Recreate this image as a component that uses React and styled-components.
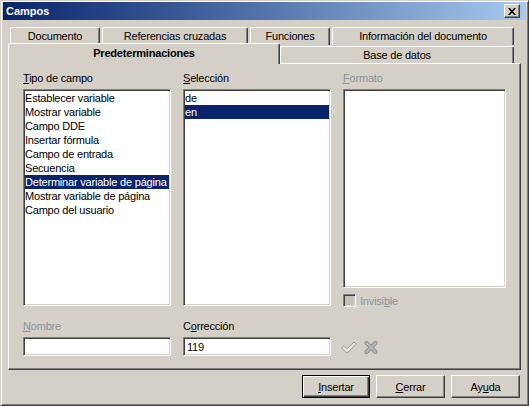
import React from "react";
import styled, { createGlobalStyle, css } from "styled-components";

const GlobalStyle = createGlobalStyle`
  html, body { margin: 0; padding: 0; background: #d4d0c8; }
  body { font-family: "Liberation Sans", Arial, sans-serif; font-size: 11px; letter-spacing: -0.2px; }
  * { box-sizing: border-box; }
`;

const FACE = "#d4d0c8";
const SEL = "#0a246a";
const DIS = "#8a939d";

const Window = styled.div`
  width: 529px;
  height: 406px;
  background: ${FACE};
  border: 1px solid;
  border-color: ${FACE} #404040 #404040 ${FACE};
  box-shadow: inset 1px 1px #ffffff, inset -1px -1px #808080;
  padding: 1px 2px 2px 2px;
  display: flex;
  flex-direction: column;
  color: #000;
`;

const TitleBar = styled.div`
  height: 18px;
  background: linear-gradient(to right, #0a246a 0%, #3a5b98 35%, #a6caf0 100%);
  display: flex;
  align-items: center;
  justify-content: space-between;
  padding: 0 6px 0 3px;
`;

const TitleText = styled.span`
  color: #fff;
  font-weight: bold;
  font-size: 11px;
  letter-spacing: 0;
`;

const raised = css`
  background: ${FACE};
  border: 1px solid;
  border-color: #ffffff #404040 #404040 #ffffff;
  box-shadow: inset -1px -1px #808080;
`;

const CloseBtn = styled.div`
  ${raised};
  width: 16px;
  height: 14px;
  display: flex;
  align-items: center;
  justify-content: center;
`;

const TabArea = styled.div`
  margin-top: 7px;
  display: flex;
  flex-direction: column;
`;

const TabRow = styled.div`
  display: flex;
  align-items: flex-end;
  margin-left: ${(p) => p.$indent}px;
  margin-top: ${(p) => p.$overlap || 0}px;
  height: ${(p) => p.$h}px;
  gap: ${(p) => p.$gap || 0}px;
`;

const Tab = styled.div`
  width: ${(p) => p.$w}px;
  height: ${(p) => p.$h}px;
  background: ${FACE};
  border-top: 1px solid #fff;
  border-left: 1px solid #fff;
  border-right: 1px solid #404040;
  box-shadow: inset -1px 0 #808080;
  border-top-left-radius: 2px;
  border-top-right-radius: 2px;
  display: flex;
  align-items: center;
  justify-content: center;
  padding-bottom: ${(p) => (p.$active ? 2 : 1)}px;
  font-weight: ${(p) => (p.$active ? "bold" : "normal")};
  white-space: nowrap;
  ${(p) =>
    p.$active &&
    css`
      position: relative;
      z-index: 1;
      margin-bottom: -1px;
    `}
`;

const Panel = styled.div`
  margin-left: 5px;
  width: 513px;
  background: ${FACE};
  border: 1px solid;
  border-color: #ffffff #404040 #404040 #ffffff;
  box-shadow: inset -1px -1px #808080;
  padding: 8px 0 13px 14px;
  display: grid;
  grid-template-columns: 148px 148px 163px;
  column-gap: 12px;
  row-gap: 13px;
  align-items: start;
`;

const Column = styled.div`
  display: flex;
  flex-direction: column;
`;

const Label = styled.div`
  height: 13px;
  line-height: 13px;
  margin-bottom: 4px;
  color: ${(p) => (p.$disabled ? DIS : "#000")};
  white-space: nowrap;
`;

const Mn = styled.u`
  text-decoration: underline;
  text-underline-offset: 1px;
`;

const sunken = css`
  background: #fff;
  border: 1px solid;
  border-color: #808080 #ffffff #ffffff #808080;
  box-shadow: inset 1px 1px #404040, inset -1px -1px ${FACE};
`;

const ListBox = styled.div`
  ${sunken};
  height: ${(p) => p.$h}px;
  padding: 1px;
  overflow: hidden;
`;

const Item = styled.div`
  height: 14px;
  line-height: 14px;
  white-space: nowrap;
  background: ${(p) => (p.$sel ? SEL : "transparent")};
  color: ${(p) => (p.$sel ? "#fff" : "#000")};
`;

const CheckRow = styled.div`
  display: flex;
  align-items: center;
  gap: 4px;
  margin-top: 6px;
  height: 13px;
  color: ${DIS};
`;

const CheckBox = styled.div`
  width: 13px;
  height: 13px;
  border: 1px solid;
  border-color: #808080 #ffffff #ffffff #808080;
  box-shadow: inset 1px 1px #404040, inset -1px -1px ${FACE};
  background: #c4c1bb;
`;

const Input = styled.div`
  ${sunken};
  width: ${(p) => p.$w || 148}px;
  height: 19px;
  line-height: 15px;
  padding: 2px 3px;
`;

const Icons = styled.div`
  display: flex;
  gap: 7px;
  align-items: center;
  margin-top: 4px;
  margin-left: -2px;
`;

const ButtonBar = styled.div`
  display: flex;
  justify-content: flex-end;
  gap: 6px;
  margin-top: 5px;
  padding-right: 6px;
`;

const Button = styled.div`
  width: ${(p) => p.$w}px;
  height: 23px;
  display: flex;
  align-items: center;
  justify-content: center;
  background: ${FACE};
  ${(p) =>
    p.$default
      ? css`
          border: 1px solid #000;
          box-shadow: inset 1px 1px #fff, inset -1px -1px #404040,
            inset -2px -2px #808080;
        `
      : css`
          border: 1px solid;
          border-color: #ffffff #404040 #404040 #ffffff;
          box-shadow: inset -1px -1px #808080;
        `}
`;

const tipos = [
  "Establecer variable",
  "Mostrar variable",
  "Campo DDE",
  "Insertar fórmula",
  "Campo de entrada",
  "Secuencia",
  "Determinar variable de página",
  "Mostrar variable de página",
  "Campo del usuario",
];

export default function App() {
  return (
    <>
      <GlobalStyle />
      <Window>
        <TitleBar>
          <TitleText>Campos</TitleText>
          <CloseBtn>
            <svg width="8" height="7" viewBox="0 0 8 7">
              <path d="M0 0h2l2 2.5L6 0h2L5 3.5 8 7H6L4 4.5 2 7H0l3-3.5z" fill="#000" />
            </svg>
          </CloseBtn>
        </TitleBar>
        <TabArea>
          <TabRow $indent={7} $h={18} $gap={2}>
            <Tab $w={90} $h={18}>Documento</Tab>
            <Tab $w={146} $h={18}>Referencias cruzadas</Tab>
            <Tab $w={80} $h={18}>Funciones</Tab>
            <Tab $w={182} $h={18}>Información del documento</Tab>
          </TabRow>
          <TabRow $indent={5} $h={20} $overlap={-2}>
            <Tab $w={272} $h={21} $active>Predeterminaciones</Tab>
            <Tab $w={234} $h={17}>Base de datos</Tab>
          </TabRow>
        </TabArea>
        <Panel>
          <Column>
            <Label>
              <Mn>T</Mn>ipo de campo
            </Label>
            <ListBox $h={217}>
              {tipos.map((t, i) => (
                <Item key={t} $sel={i === 6}>
                  {t}
                </Item>
              ))}
            </ListBox>
          </Column>
          <Column>
            <Label>
              <Mn>S</Mn>elección
            </Label>
            <ListBox $h={217}>
              <Item>de</Item>
              <Item $sel>en</Item>
            </ListBox>
          </Column>
          <Column>
            <Label $disabled>
              <Mn>F</Mn>ormato
            </Label>
            <ListBox $h={199} />
            <CheckRow>
              <CheckBox />
              <span>
                Invisi<Mn>b</Mn>le
              </span>
            </CheckRow>
          </Column>
          <Column>
            <Label $disabled>
              <Mn>N</Mn>ombre
            </Label>
            <Input />
          </Column>
          <Column>
            <Label>
              C<Mn>o</Mn>rrección
            </Label>
            <Input>119</Input>
          </Column>
          <Column>
            <Label />
            <Icons>
              <svg width="16" height="13" viewBox="0 0 16 13">
                <path
                  d="M0.8 7.2 L3.2 5 L6 7.6 L13 1 L15.2 3.2 L6 12 Z"
                  fill="#e4e2dd"
                  stroke="#9c9c9c"
                  strokeWidth="1"
                  strokeLinejoin="round"
                />
              </svg>
              <svg width="14" height="13" viewBox="0 0 14 13">
                <path
                  d="M2.5 2 L11.5 11 M11.5 2 L2.5 11"
                  stroke="#8f8f8f"
                  strokeWidth="4"
                  strokeLinecap="round"
                />
                <path
                  d="M2.5 2 L11.5 11 M11.5 2 L2.5 11"
                  stroke="#b8b8b8"
                  strokeWidth="2"
                  strokeLinecap="round"
                />
              </svg>
            </Icons>
          </Column>
        </Panel>
        <ButtonBar>
          <Button $w={68} $default>
            <span>
              <Mn>I</Mn>nsertar
            </span>
          </Button>
          <Button $w={69}>
            <span>
              <Mn>C</Mn>errar
            </span>
          </Button>
          <Button $w={69}>
            <span>
              Ay<Mn>u</Mn>da
            </span>
          </Button>
        </ButtonBar>
      </Window>
    </>
  );
}
